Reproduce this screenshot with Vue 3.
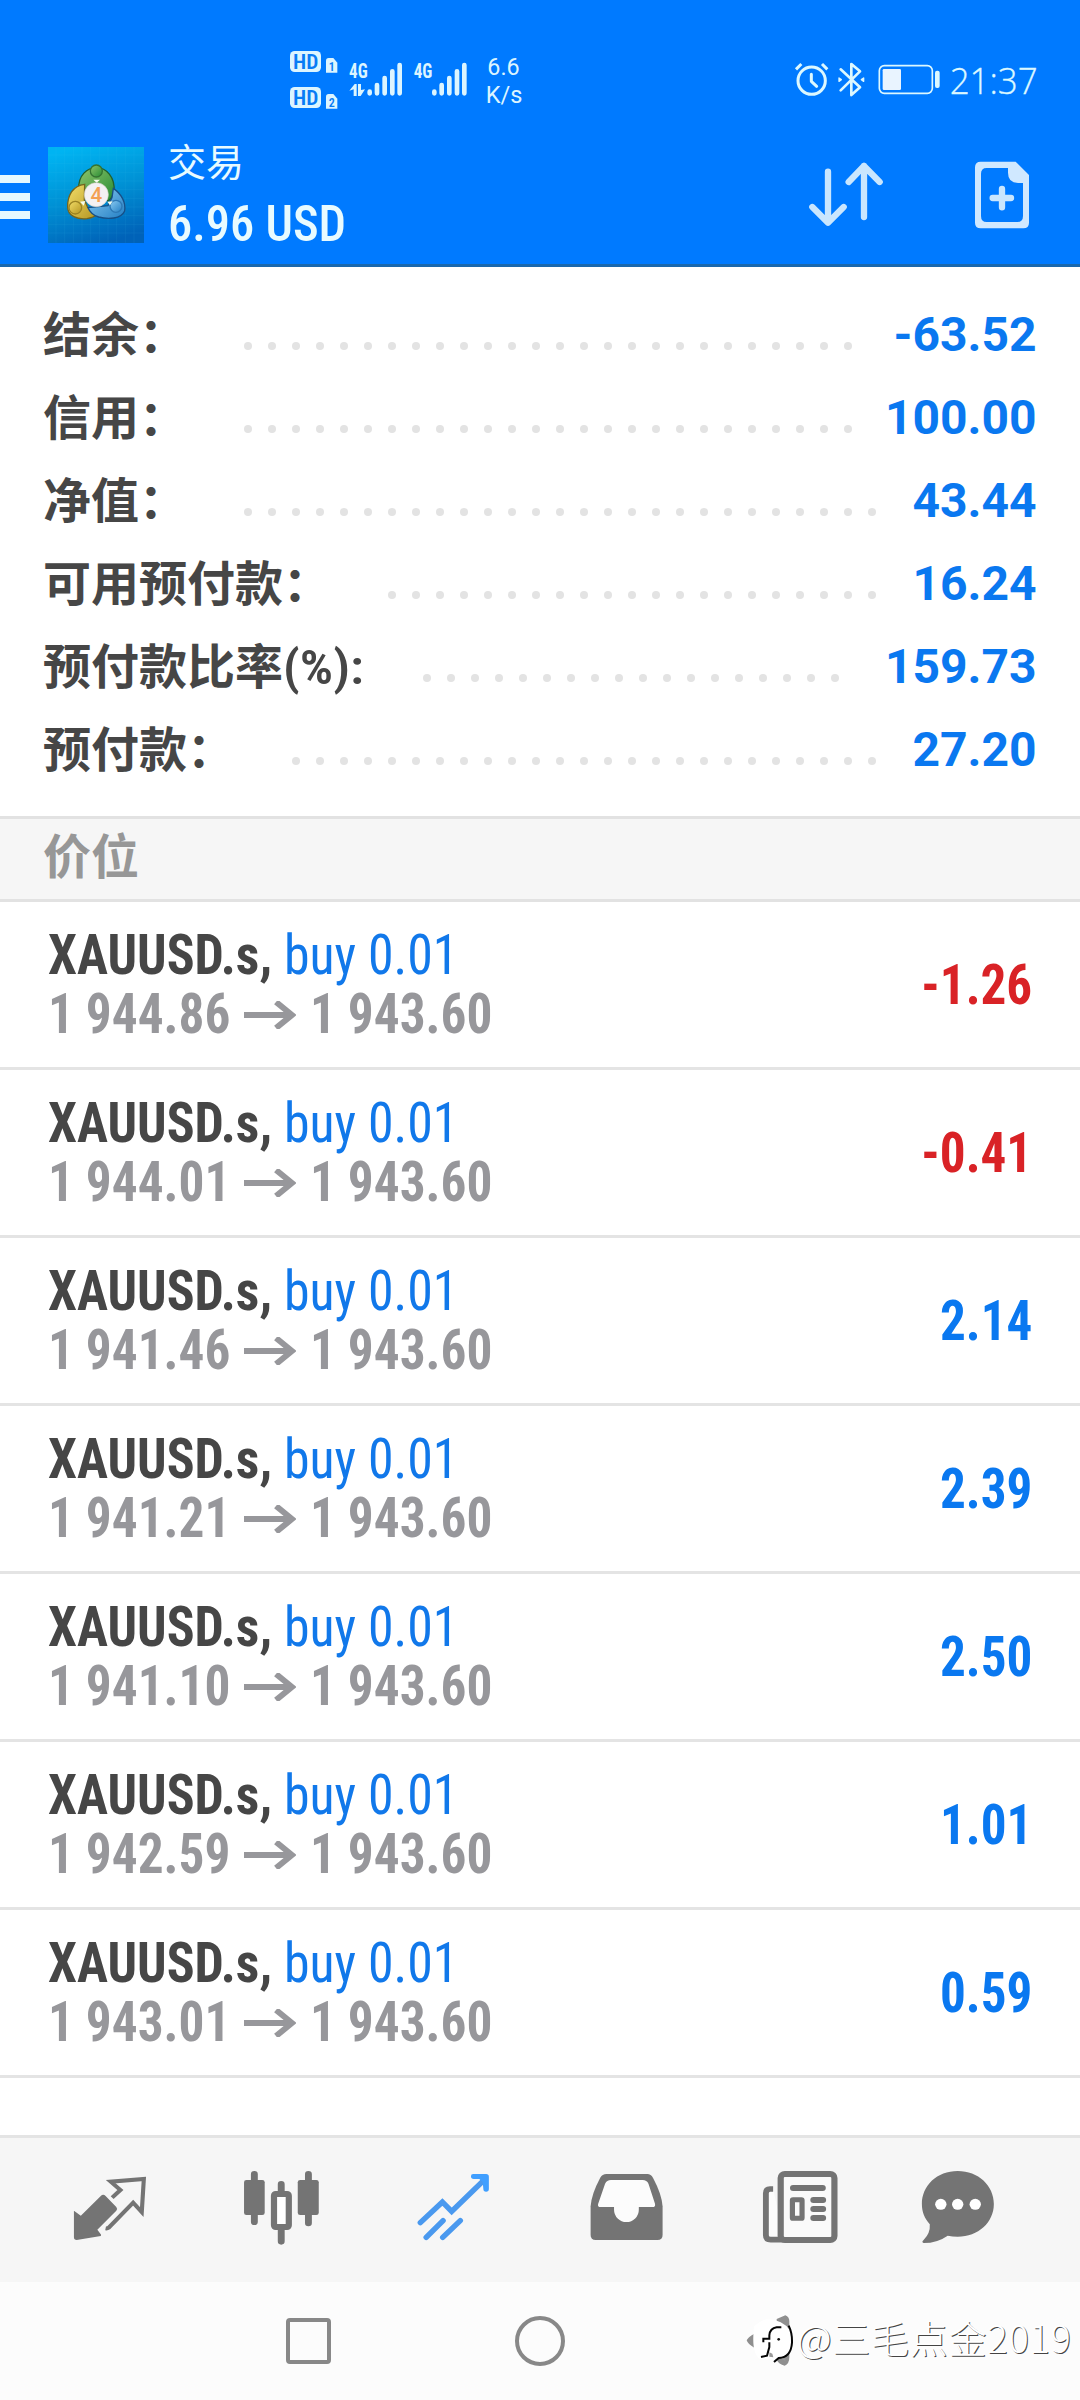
<script setup>
const summary = [
  { label: '结余：', value: '-63.52', start: 244, dots: 26 },
  { label: '信用：', value: '100.00', start: 244, dots: 26 },
  { label: '净值：', value: '43.44', start: 244, dots: 27 },
  { label: '可用预付款：', value: '16.24', start: 388, dots: 21 },
  { label: '预付款比率', suffix: '(%):', value: '159.73', start: 423, dots: 18 },
  { label: '预付款：', value: '27.20', start: 292, dots: 25 },
]
const positions = [
  { open: '1 944.86', profit: '-1.26' },
  { open: '1 944.01', profit: '-0.41' },
  { open: '1 941.46', profit: '2.14' },
  { open: '1 941.21', profit: '2.39' },
  { open: '1 941.10', profit: '2.50' },
  { open: '1 942.59', profit: '1.01' },
  { open: '1 943.01', profit: '0.59' },
]
</script>

<template>
  <div class="screen">
    <header class="top">
      <div class="status">
        <svg class="net" width="270" height="100" viewBox="0 0 810 300">
          <g fill="#dcf5ff">
            <rect x="0" y="63" width="93" height="63" rx="14" />
            <rect x="0" y="171" width="93" height="63" rx="14" />
            <path d="M108 92q0-8 8-8h14l12 14v30h-34z" />
            <path d="M108 200q0-8 8-8h14l12 14v30h-34z" />
          </g>
          <g class="narrow" fill="#087cf5" font-weight="600">
            <text x="9" y="116" font-size="58" textLength="76" lengthAdjust="spacingAndGlyphs">HD</text>
            <text x="9" y="224" font-size="58" textLength="76" lengthAdjust="spacingAndGlyphs">HD</text>
            <text x="116" y="123" font-size="36">1</text>
            <text x="116" y="231" font-size="36">2</text>
          </g>
          <g class="narrow" fill="#dcf5ff" font-weight="700" font-size="60">
            <text x="177" y="143" textLength="56" lengthAdjust="spacingAndGlyphs">4G</text>
            <text x="371" y="143" textLength="56" lengthAdjust="spacingAndGlyphs">4G</text>
          </g>
          <g stroke="#dcf5ff" stroke-width="14" stroke-linecap="round" fill="none">
            <path d="M239 185v5M261 165v25M284 144v46M307 124v66M329 105v85" />
            <path d="M433 185v5M455 165v25M478 144v46M501 124v66M523 105v85" />
          </g>
          <path d="M178 182l16-20h6v36h-9v-20zM204 162h9v18l12-2-13 20h-8z" fill="#dcf5ff" />
          <g fill="#dcf5ff" font-family="Roboto" font-size="73">
            <text x="592" y="135" textLength="97" lengthAdjust="spacingAndGlyphs">6.6</text>
            <text x="587" y="218" textLength="110" lengthAdjust="spacingAndGlyphs">K/s</text>
          </g>
        </svg>
        <svg class="sys" width="320" height="80" viewBox="0 0 960 240">
          <g fill="none" stroke="#dcf8ff" stroke-linecap="round" stroke-linejoin="round">
            <circle cx="155" cy="122" r="41" stroke-width="9" />
            <path d="M154 103v21l16 15" stroke-width="9" />
            <path d="M108 88l16-16M186 72l16 16" stroke-width="9" stroke-linecap="butt" />
            <path d="M242 88l58 54-26 23V72l26 22-58 57" stroke-width="8" />
            <path d="M237 114l7 5-7 5zM311 114l-7 5 7 5z" stroke-width="4" fill="#dcf8ff" />
            <rect x="358" y="77" width="159" height="83" rx="15" stroke-width="5" />
          </g>
          <rect x="368" y="87" width="55" height="63" rx="4" fill="#e9f4ff" />
          <rect x="525" y="92" width="14" height="52" rx="6" fill="#dcf8ff" />
          <text x="569" y="161" font-family="Open Sans" font-weight="300" font-size="108" fill="#dcf8ff" stroke="#dcf8ff" stroke-width="1" textLength="264" lengthAdjust="spacingAndGlyphs">21:37</text>
        </svg>
      </div>
      <div class="bar">
        <div class="menu"><i></i><i></i><i></i></div>
        <svg class="logo" width="96" height="96" viewBox="0 0 288 288">
          <defs>
            <linearGradient id="bg" x1=".3" y1="0" x2=".6" y2="1"><stop offset="0" stop-color="#00b4f2" /><stop offset=".5" stop-color="#0090d4" /><stop offset="1" stop-color="#0062b8" /></linearGradient>
            <linearGradient id="gr" x1="0" y1="0" x2="1" y2="1"><stop offset="0" stop-color="#8fc46b" /><stop offset="1" stop-color="#268c34" /></linearGradient>
            <linearGradient id="ye" x1="0" y1="0" x2="1" y2="1"><stop offset="0" stop-color="#f3de69" /><stop offset="1" stop-color="#b39420" /></linearGradient>
            <linearGradient id="bl" x1="0" y1="0" x2="1" y2="1"><stop offset="0" stop-color="#8cccf2" /><stop offset="1" stop-color="#237fc4" /></linearGradient>
          </defs>
          <rect width="288" height="288" fill="url(#bg)" />
          <path d="M24 0v288M50 0v288M76 0v288M102 0v288M128 0v288M154 0v288M180 0v288M206 0v288M232 0v288M258 0v288M0 24h288M0 50h288M0 76h288M0 102h288M0 128h288M0 154h288M0 180h288M0 206h288M0 232h288M0 258h288" stroke="#4fd0f0" stroke-opacity=".13" stroke-width="2" />
          <g stroke-width="4">
            <path d="M92 128C90 84 118 62 146 62s56 28 52 72q-4 18-18 28l-36-54-34 30z" fill="url(#gr)" stroke="#23602b" />
            <path d="M110 112c-36 4-52 34-51 68 0 28 30 38 58 35q20-3 32-14l-30-20-10-22z" fill="url(#ye)" stroke="#74651e" />
            <path d="M196 124c24 16 38 42 34 68-10 24-50 26-78 18q-24-8-32-28l60-6 12-24z" fill="url(#bl)" stroke="#174f86" />
            <circle cx="145" cy="72" r="18" fill="url(#gr)" stroke="#347332" />
            <circle cx="82" cy="182" r="19" fill="url(#ye)" stroke="#9a8223" />
            <circle cx="204" cy="178" r="18" fill="url(#bl)" stroke="#2c78b5" />
          </g>
          <path d="M136 98h20l-10 9zM96 164l16-2-5 14zM178 164l16-1-8 12z" fill="#f5fbec" />
          <circle cx="145" cy="143" r="36" fill="#f4f1f3" stroke="#d9d5cb" stroke-width="2" />
          <text x="145" y="166" text-anchor="middle" font-family="Roboto" font-weight="500" font-size="62" fill="#f3a054">4</text>
        </svg>
        <div class="heading">
          <div class="title">交易</div>
          <div class="amount cond">6.96 USD</div>
        </div>
        <svg class="actions" width="320" height="140" viewBox="0 0 960 420">
          <g fill="none" stroke="#c9e6fe" stroke-width="19" stroke-linecap="round" stroke-linejoin="round">
            <path d="M204 125v152M157 231l47 47 47-47M312 261V108M266 156l46-48 47 48" />
            <path d="M698 204h55M726 177v55" />
          </g>
          <path fill="#d0e8ff" fill-rule="evenodd" d="M662 95h105l40 40v143q0 17-17 17H662q-17 0-17-17V112q0-17 17-17zm18 19q-17 0-17 17v127q0 18 17 18h92q17 0 17-18v-99h-14q-31 0-31-31v-14z" />
        </svg>
      </div>
    </header>

    <section class="summary">
      <div v-for="row in summary" :key="row.label" class="line">
        <div class="label" :style="{ width: row.start - 43 + 'px' }">{{ row.label }}<span v-if="row.suffix" class="cond suffix">{{ row.suffix }}</span></div>
        <div class="dots"><i v-for="n in row.dots" :key="n"></i></div>
        <div class="value">{{ row.value }}</div>
      </div>
    </section>

    <div class="section-title">价位</div>

    <section class="positions">
      <article v-for="p in positions" :key="p.open" class="position">
        <div class="detail">
          <div class="first cond"><b>XAUUSD.s,</b> <span>buy 0.01</span></div>
          <div class="second cond">
            <span class="price">{{ p.open }}</span>
            <svg width="52" height="28" viewBox="0 0 52 28"><path d="M0 14h48M32 1l16 13-16 13" fill="none" stroke="#97979b" stroke-width="6" /></svg>
            <span class="price">1 943.60</span>
          </div>
        </div>
        <div class="profit cond" :class="{ loss: p.profit.startsWith('-') }">{{ p.profit }}</div>
      </article>
    </section>

    <nav class="tabs">
      <svg viewBox="70 234 499.5 432" preserveAspectRatio="none">
        <path d="M215 452l20 15 58-59q7-7 14 0l31 33q5 6 0 11l-55 57 11 15-1 4-70 12q-8 0-8-8z" fill="#747474" />
        <path d="M326 413l24-23-28-25 96-8-6 99-25-28-71 75q-4 3-9 2" fill="none" stroke="#747474" stroke-width="12" />
      </svg>
      <svg viewBox="569.5 234 499.5 432" preserveAspectRatio="none">
        <path d="M739 343v142M896 343v146M817 373v30M817 505v39" stroke="#747474" stroke-width="20" stroke-linecap="round" />
        <rect x="709" y="360" width="60" height="105" rx="7" fill="#747474" />
        <rect x="865" y="360" width="61" height="105" rx="7" fill="#747474" />
        <rect x="796" y="402" width="43" height="99" rx="5" fill="#fff" stroke="#747474" stroke-width="18" />
      </svg>
      <svg viewBox="1069 234 499.5 432" preserveAspectRatio="none">
        <path d="M1221 488l64-62 27 28 96-96M1238 532l49-50M1286 532l51-50" fill="none" stroke="#4a99ef" stroke-width="16" stroke-linecap="round" />
        <path d="M1376 342h36q8 0 8 8v37q0 8-8 8t-8-8l-2-22-10-8h-16q-8 0-8-8t8-7z" fill="#409fff" />
      </svg>
      <svg viewBox="0 234 499.5 432" preserveAspectRatio="none">
        <path d="M193 342h119q10 0 16 11 26 50 28 86v86q0 15-15 15H162q-15 0-15-15v-86q2-36 28-86 6-11 18-11z" fill="#747474" />
        <path d="M206 360h92q12 0 17 11l19 60q2 10-7 10h-40v8a36 37 0 0 1-72 0v-8h-39q-10 0-7-10l20-60q5-11 17-11z" fill="#fcfcfc" />
      </svg>
      <svg viewBox="499.5 234 499.5 432" preserveAspectRatio="none">
        <path d="M677 387h-9q-12 0-12 13v126q0 13 14 13h40" fill="#fcfcfc" stroke="#747474" stroke-width="17" />
        <rect x="699" y="342" width="156" height="198" rx="12" fill="#fafafa" stroke="#747474" stroke-width="18" />
        <path d="M735 384h86M794 420h28M794 447h28M794 474h28" stroke="#747474" stroke-width="18" stroke-linecap="round" />
        <rect x="733" y="419" width="28" height="56" rx="2" fill="#fafafa" stroke="#747474" stroke-width="15" />
      </svg>
      <svg viewBox="999 234 499.5 432" preserveAspectRatio="none">
        <path d="M1213 333c60 0 105 44 105 99s-45 98-105 98q-15 0-29-3-30 22-70 22-7-3 0-9 20-20 18-47c-15-18-23-36-23-61 0-55 44-99 104-99z" fill="#747474" />
        <circle cx="1164" cy="433" r="16.500" fill="#fff" /><circle cx="1213" cy="433" r="16.500" fill="#fff" /><circle cx="1264" cy="433" r="16.500" fill="#fff" />
      </svg>
    </nav>

    <footer class="system-nav">
      <i class="recent"></i>
      <i class="home"></i>
      <svg class="back" width="50" height="56" viewBox="140 100 150 168">
        <path d="M142 182q3-9 23-20v42q-20-11-23-22zM232 118l26-11q12 5 12 18v108q0 20-14 25-18-5-24-18z" fill="#8f8f8f" />
        <path d="M164 140q34-35 80-12 40 20 34 64-8 46-42 46h-54q-27-15-18-98z" fill="#fff" />
        <path d="M246 143h-14q-20 3-22 24v10h-18v11M210 188v14l-7 26-18 4M268 138q11 22 10 51c-2 31-18 46-40 46l-14 12" fill="none" stroke="#050505" stroke-width="6" />
        <circle cx="238" cy="179" r="4" fill="#111" />
        <path d="M210 218l9 4 3 11-12-2zM245 238l13-3v8z" fill="#999" />
      </svg>
      <span class="mark">@三毛点金2019</span>
    </footer>
  </div>
</template>

<style>
body { margin: 0; background: #fff; }
</style>

<style scoped>
.screen {
  width: 1080px;
  height: 2400px;
  display: flex;
  flex-direction: column;
  overflow: hidden;
  background: #fff;
  font-family: Roboto, "Noto Sans CJK SC", sans-serif;
}
.cond, .narrow { font-family: "Roboto Condensed", Roboto, sans-serif; font-stretch: 75%; white-space: pre; }
.top { height: 267px; box-sizing: border-box; background: #007aff; border-bottom: 3px solid #1a68ad; flex: none; }
.status { height: 130px; display: flex; justify-content: space-between; align-items: flex-start; }
.net { margin: 30px 0 0 290px; }
.sys { margin-top: 40px; }
.bar { height: 134px; display: flex; align-items: flex-start; }
.menu { width: 30px; margin-top: 45px; display: flex; flex-direction: column; gap: 10px; }
.menu i { height: 8px; background: #e6f8ff; }
.logo { margin: 17px 0 0 18px; flex: none; }
.heading { margin-left: 24px; flex: 1; color: #e8fbff; }
.title { font: 400 38px/50px "Noto Sans CJK SC", sans-serif; margin-top: 5px; }
.amount {
  font-size: 50px; font-weight: 480; line-height: 60px; margin-top: 9px;
  transform: scaleX(0.970); transform-origin: left;
}
.actions { flex: none; }

.summary { height: 549px; box-sizing: border-box; padding: 26px 43.500px 0 43px; flex: none; }
.line { height: 83px; display: flex; align-items: center; }
.label {
  font: 700 48px/83px "Noto Sans CJK SC", sans-serif; color: #464646; white-space: nowrap; flex: none;
  height: 83px; margin-top: -6px;
}
.suffix { display: inline-block; font-weight: 600; line-height: 1; transform: scaleX(1.090); transform-origin: left; }
.dots { display: flex; gap: 16px; margin-top: 23px; }
.dots i { width: 8px; height: 8px; border-radius: 50%; background: #e3e3e3; }
.value { margin-left: auto; font: 700 48px/83px Roboto, sans-serif; color: #0a78f0; }

.section-title {
  height: 86px; box-sizing: border-box; flex: none;
  border-top: 3px solid #e2e2e2; border-bottom: 3px solid #e2e2e2; background: #f6f6f6;
  padding-left: 43px; font: 700 48px/68px "Noto Sans CJK SC", sans-serif; color: #979797;
}
.positions { height: 1233px; flex: none; }
.position {
  height: 168px; box-sizing: border-box; border-bottom: 3px solid #e4e4e4;
  padding: 24px 48px 0 48px; display: flex; justify-content: space-between;
}
.first, .second { font-size: 55px; line-height: 59px; height: 59px; }
.first { transform: scaleX(0.942); transform-origin: left; }
.first b { color: #464646; font-weight: 700; }
.first span { color: #1178ea; font-weight: 450; }
.second { color: #97979b; font-weight: 700; display: flex; }
.price { width: 196px; transform: scaleX(0.933); transform-origin: left; }
.second svg { margin: 16px 14px 0 0; }
.profit {
  font-size: 55px; font-weight: 700; line-height: 119px; color: #0a78f0;
  transform: scaleX(0.930); transform-origin: right;
}
.profit.loss { color: #d92226; }

.tabs {
  height: 147px; box-sizing: border-box; flex: none; display: flex; padding-left: 24px;
  border-top: 3px solid #e4e4e4; background: #f6f6f6;
}
.tabs svg { width: 172px; height: 144px; flex: none; }
.system-nav { height: 118px; background: #fcfcfc; display: flex; align-items: center; }
.recent { width: 37px; height: 38px; border: 4px solid #888; border-radius: 4px; margin-left: 286px; }
.home { width: 42px; height: 42px; border: 4px solid #888; border-radius: 50%; margin-left: 184px; }
.back { margin: 0 0 1px 181px; flex: none; }
.mark {
  font: 300 38px/50px "Noto Sans CJK SC", sans-serif; letter-spacing: 0.750px; color: #fff;
  text-shadow: 1px 1px 0 #444; white-space: nowrap; margin: -9px 0 0 1px;
}
</style>
